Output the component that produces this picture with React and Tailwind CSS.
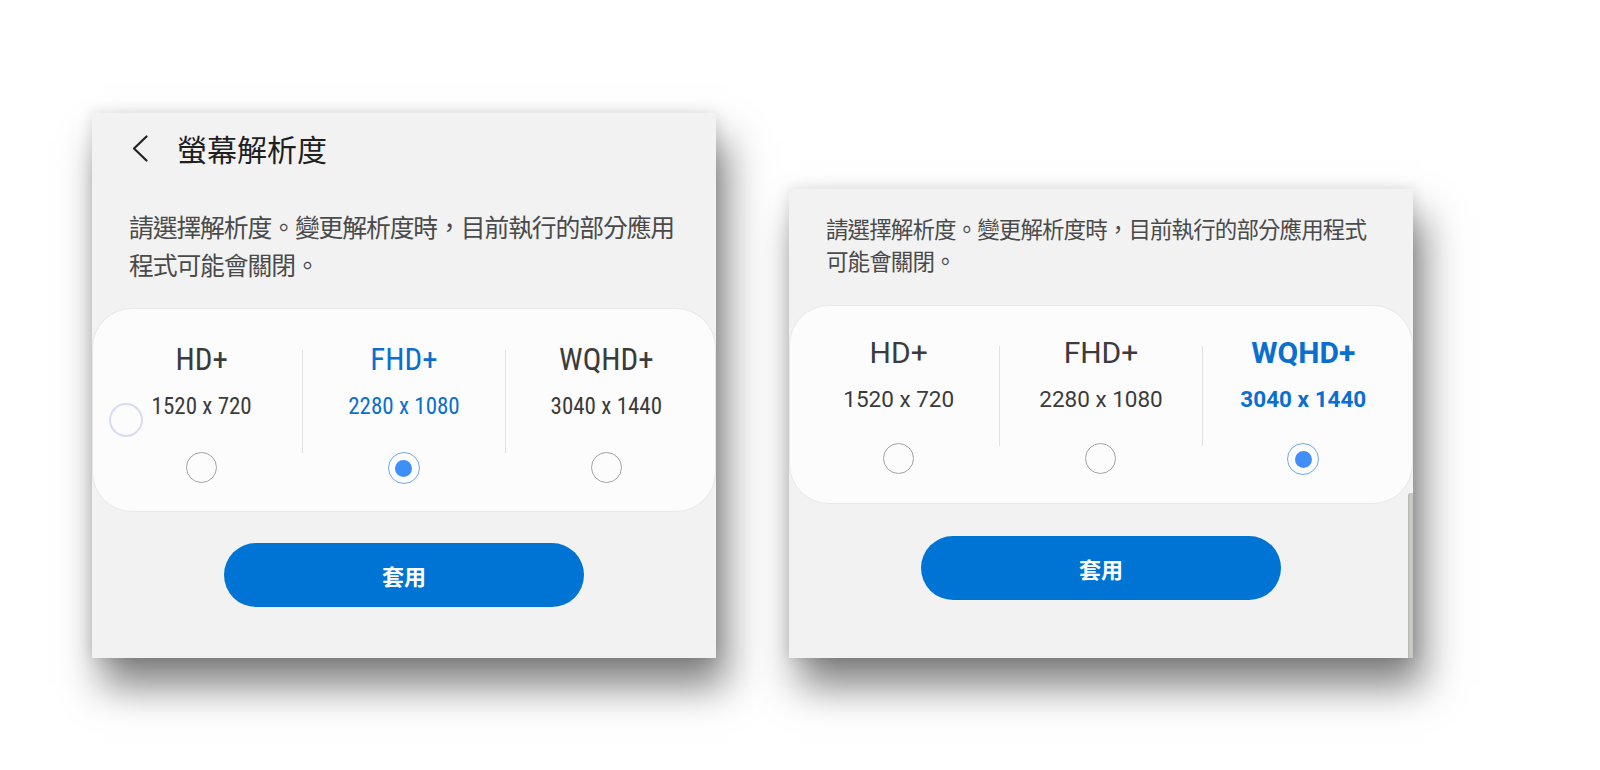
import React from 'react'

const CJK = { fontFamily: '"Noto Sans CJK TC", "Noto Sans CJK SC", sans-serif' }

const OPTIONS = [
  { key: 'hd', label: 'HD+', size: '1520 x 720' },
  { key: 'fhd', label: 'FHD+', size: '2280 x 1080' },
  { key: 'wqhd', label: 'WQHD+', size: '3040 x 1440' },
]

// the two captures come from different phones: condensed vs regular Roboto
const VARIANTS = {
  narrow: {
    font: "font-['Roboto_Condensed',Roboto,sans-serif]",
    label: 'text-[31px] leading-[36px]',
    size: 'mt-[15px] text-[23px] leading-[28px]',
    col: 'pt-[33px] pb-[27px]',
    radio: 'mt-[31px]',
    divider: 'h-[103px] mt-[41px]',
  },
  wide: {
    font: 'font-[Roboto,sans-serif]',
    label: 'text-[30px] leading-[36px]',
    size: 'mt-[14px] text-[22.5px] leading-[28px]',
    col: 'pt-[29px] pb-[28px]',
    radio: 'mt-[30px]',
    divider: 'h-[100px] mt-[40px]',
  },
}

const Radio = ({ checked }) =>
  checked ? (
    <div className="w-[32px] h-[32px] rounded-full border-[1.5px] border-[#6fa8ef] flex items-center justify-center">
      <div className="w-[17px] h-[17px] rounded-full bg-[#3f8ff7]" />
    </div>
  ) : (
    <div className="w-[31px] h-[31px] rounded-full border-[1.5px] border-[#a3a3a3]" />
  )

const Column = ({ opt, selected, bold, v }) => {
  const on = opt.key === selected
  const tone = `${on ? 'text-[#0a6fcf]' : 'text-[#3b3b3b]'} ${on && bold ? 'font-bold' : ''}`
  return (
    <div className={`flex-1 flex flex-col items-center ${v.col}`}>
      <div className={`${v.font} ${v.label} ${tone}`}>{opt.label}</div>
      <div className={`${v.font} ${v.size} ${tone}`}>{opt.size}</div>
      <div className={v.radio}>
        <Radio checked={on} />
      </div>
    </div>
  )
}

const ResolutionCard = ({ selected, bold, ghost, variant }) => {
  const v = VARIANTS[variant]
  return (
    <div className="relative flex px-[8px] rounded-[40px] bg-[#fcfcfc] border border-[#e9e9e9]">
      <Column opt={OPTIONS[0]} selected={selected} bold={bold} v={v} />
      <div className={`w-px shrink-0 bg-[#e2e2e2] ${v.divider}`} />
      <Column opt={OPTIONS[1]} selected={selected} bold={bold} v={v} />
      <div className={`w-px shrink-0 bg-[#e2e2e2] ${v.divider}`} />
      <Column opt={OPTIONS[2]} selected={selected} bold={bold} v={v} />
      {/* touch ripple left over from the screen capture */}
      {ghost && (
        <div className="absolute left-[16px] top-[94px] w-[34px] h-[34px] rounded-full border-2 border-[#d9daf4]" />
      )}
    </div>
  )
}

const ApplyButton = () => (
  <button
    className="block mx-auto w-[360px] h-[64px] rounded-full bg-[#0074d4] text-white text-[22px] font-bold"
    style={CJK}
  >
    套用
  </button>
)

export default function App() {
  return (
    <div className="w-[1600px] h-[770px] bg-white overflow-hidden flex items-start">
      {/* left capture: with header */}
      <div className="ml-[92px] mt-[113px] w-[624px] h-[545px] bg-[#f2f2f2] shadow-[0_0_14px_rgba(0,0,0,0.12),10px_28px_38px_rgba(0,0,0,0.5)] flex flex-col">
        <div className="h-[70px] flex items-center pl-[40px]" style={CJK}>
          <svg width="16" height="27" viewBox="0 0 16 27" fill="none">
            <path d="M14.5 1.5L2 13.5L14.5 25.5" stroke="#222" strokeWidth="2.2" strokeLinecap="round" strokeLinejoin="round" />
          </svg>
          <span className="ml-[29px] text-[30px] leading-[40px] text-[#1f1f1f]">螢幕解析度</span>
        </div>
        <p className="mt-[24px] pl-[37px] w-[620px] whitespace-nowrap text-[24.8px] leading-[38px] tracking-[-1.1px] text-[#4a4a4a]" style={CJK}>
          請選擇解析度。變更解析度時，目前執行的部分應用
          <br />
          程式可能會關閉。
        </p>
        <div className="mt-[25px]">
          <ResolutionCard selected="fhd" ghost variant="narrow" />
        </div>
        <div className="mt-[31px]">
          <ApplyButton />
        </div>
      </div>

      {/* right capture: scrolled, no header */}
      <div className="relative ml-[73px] mt-[189px] w-[624px] h-[469px] bg-[#f2f2f2] shadow-[0_0_14px_rgba(0,0,0,0.12),10px_28px_38px_rgba(0,0,0,0.5)] flex flex-col pt-[23px]">
        <p className="pl-[37px] w-[620px] whitespace-nowrap text-[22.5px] leading-[32px] tracking-[-0.9px] text-[#4a4a4a]" style={CJK}>
          請選擇解析度。變更解析度時，目前執行的部分應用程式
          <br />
          可能會關閉。
        </p>
        <div className="mt-[29px]">
          <ResolutionCard selected="wqhd" bold variant="wide" />
        </div>
        <div className="mt-[32px]">
          <ApplyButton />
        </div>
        <div className="absolute right-0 top-[304px] bottom-0 w-[5px] rounded-tl-[3px] bg-[#cbc7c3] border-l border-[#b9b5b1]" />
      </div>
    </div>
  )
}
